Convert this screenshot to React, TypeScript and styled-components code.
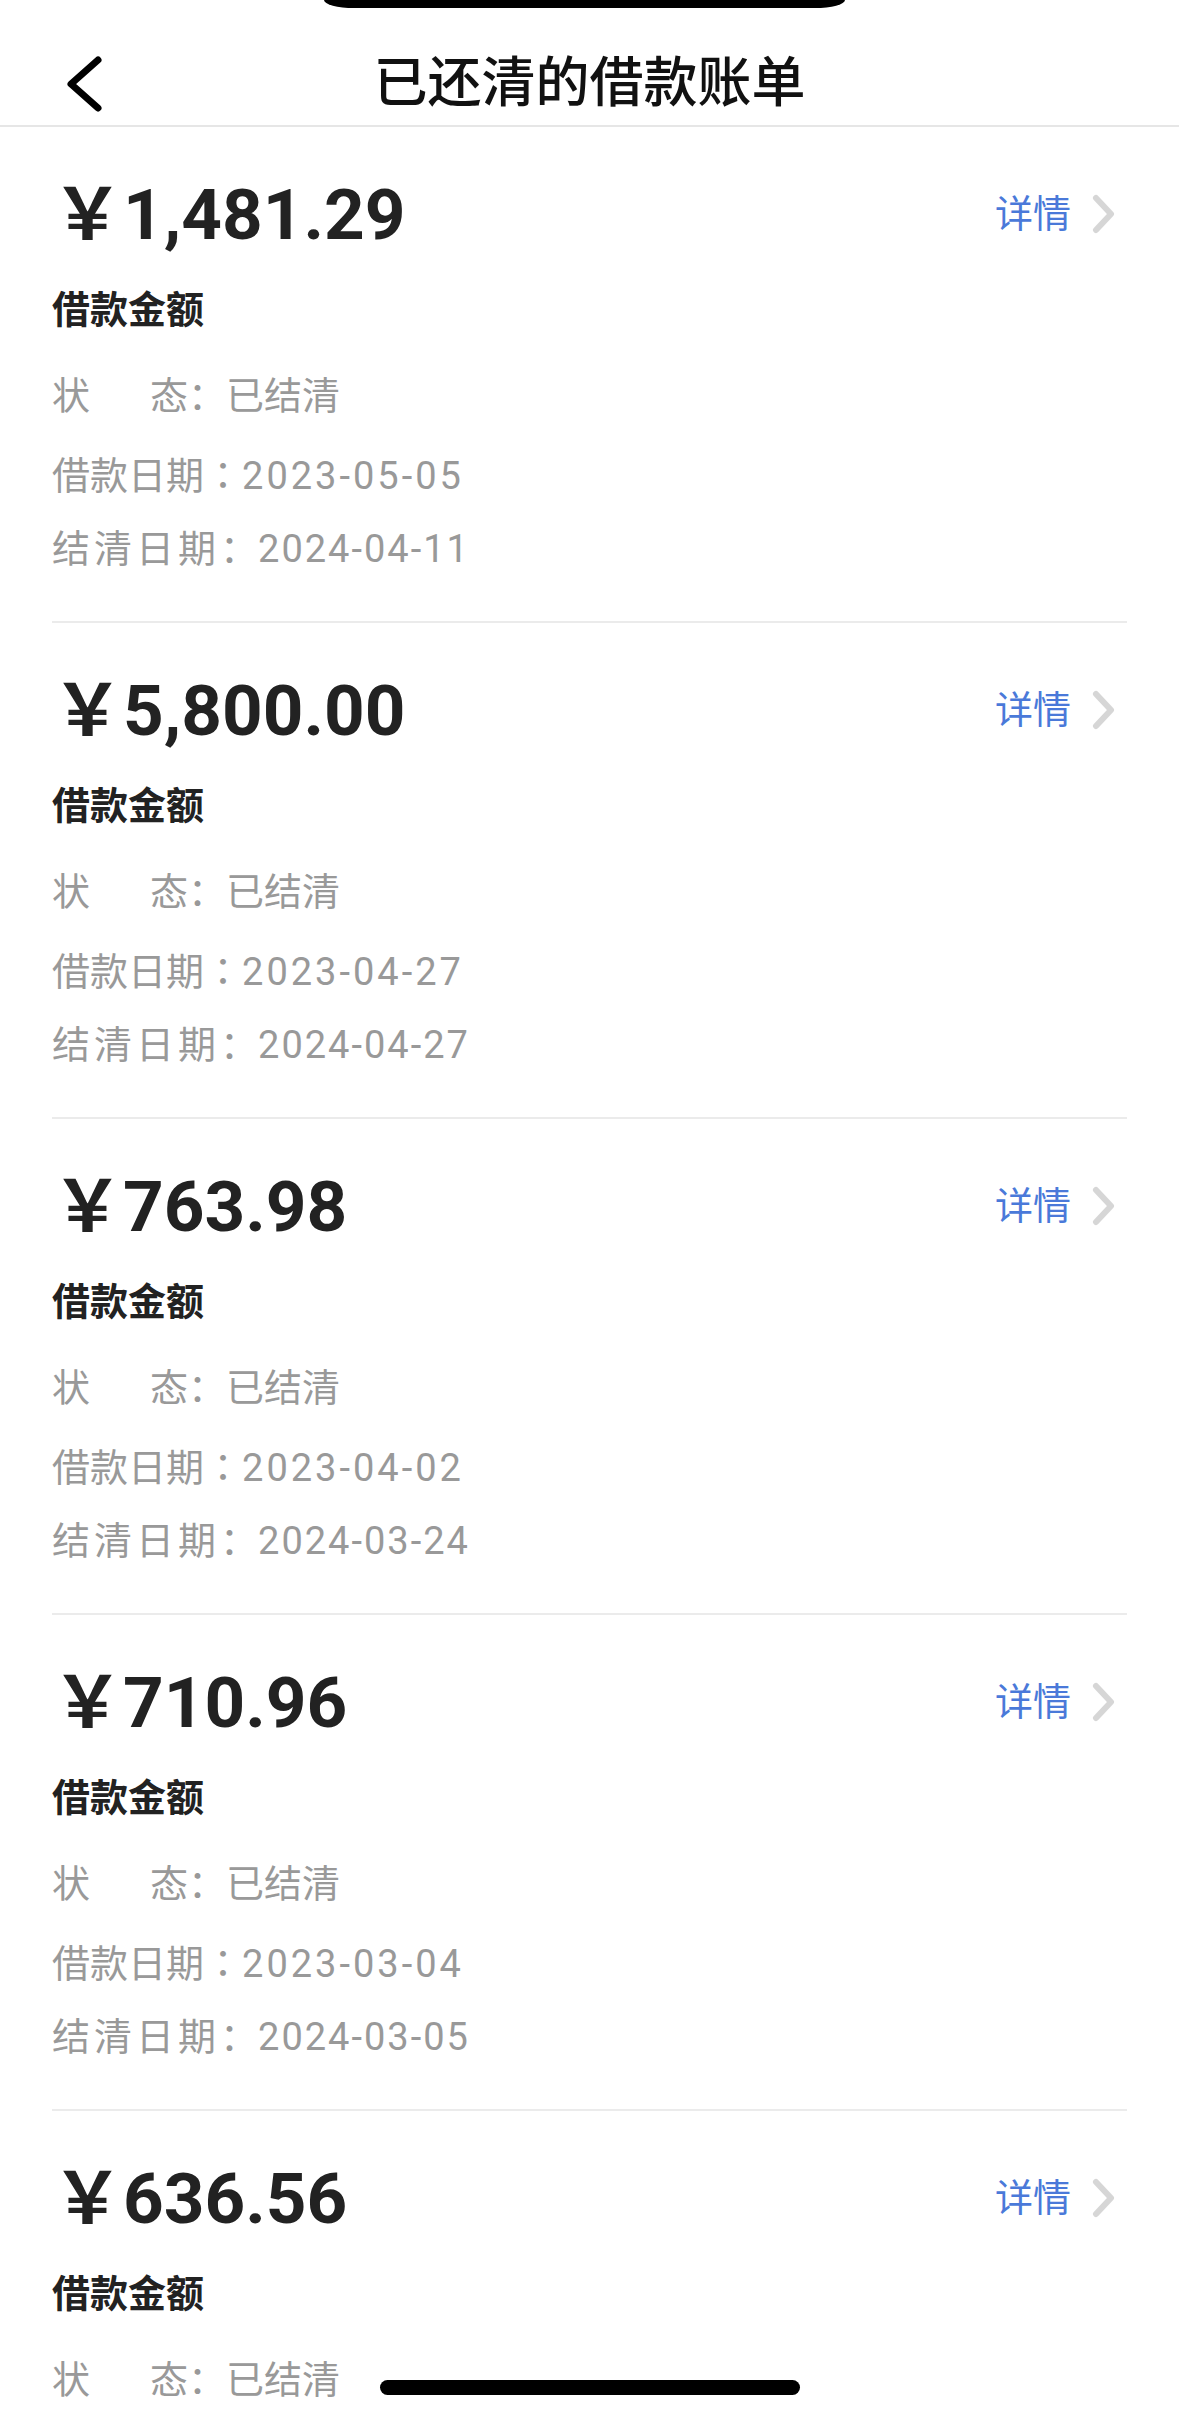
import { createGlobalStyle, styled } from "styled-components";

const GlobalStyle = createGlobalStyle`
  html, body {
    margin: 0;
    padding: 0;
    background: #fff;
  }
  body {
    font-family: Roboto, "Noto Sans CJK SC", sans-serif;
    -webkit-font-smoothing: antialiased;
  }
`;

const records = [
  { amount: "1,481.29", loanDate: "2023-05-05", settleDate: "2024-04-11" },
  { amount: "5,800.00", loanDate: "2023-04-27", settleDate: "2024-04-27" },
  { amount: "763.98", loanDate: "2023-04-02", settleDate: "2024-03-24" },
  { amount: "710.96", loanDate: "2023-03-04", settleDate: "2024-03-05" },
  { amount: "636.56", loanDate: "2023-02-14", settleDate: "2024-02-20" },
];

const BackIcon = () => (
  <svg width="42" height="58" viewBox="0 0 42 58">
    <path
      d="M34 5 L7 29 L34 53"
      fill="none"
      stroke="#000"
      strokeWidth="7"
      strokeLinecap="round"
      strokeLinejoin="round"
    />
  </svg>
);

const ArrowIcon = () => (
  <svg width="26" height="40" viewBox="0 0 26 40">
    <path
      d="M5 4 L20 20 L5 36"
      fill="none"
      stroke="#d6d6d6"
      strokeWidth="6"
      strokeLinecap="round"
      strokeLinejoin="round"
    />
  </svg>
);

export default function App() {
  return (
    <Screen>
      <GlobalStyle />
      <Header>
        <Notch />
        <BackButton>
          <BackIcon />
        </BackButton>
        <Title>已还清的借款账单</Title>
        <span />
      </Header>
      {records.map((r) => (
        <Card key={r.amount}>
          <AmountRow>
            <Amount>￥{r.amount}</Amount>
            <DetailLink>
              详情
              <ArrowIcon />
            </DetailLink>
          </AmountRow>
          <Label>借款金额</Label>
          <InfoRow $top={45}>
            <FieldName $width={136}>状态</FieldName>
            <Colon>：</Colon>已结清
          </InfoRow>
          <InfoRow $top={42}>
            <FieldName>借款日期</FieldName>
            <Colon $centered>：</Colon>
            <DateValue>{r.loanDate}</DateValue>
          </InfoRow>
          <InfoRow $top={35}>
            <FieldName $spread={4}>结清日期</FieldName>
            <Colon>：</Colon>
            <DateValue $spread={2}>{r.settleDate}</DateValue>
          </InfoRow>
        </Card>
      ))}
      <HomeIndicator />
    </Screen>
  );
}

const Screen = styled.div`
  position: relative;
  width: 1179px;
  height: 2413px;
  overflow: hidden;
  background: #fff;
`;

const Header = styled.header`
  position: relative;
  display: grid;
  grid-template-columns: 1fr auto 1fr;
  align-items: center;
  height: 127px;
  padding-top: 42px;
  box-sizing: border-box;
  border-bottom: 2px solid #e6e6e6;
`;

const Notch = styled.div`
  position: absolute;
  top: 0;
  left: 324px;
  width: 521px;
  height: 8px;
  background: #000;
  border-radius: 0 0 30px 30px / 0 0 8px 8px;
`;

const BackButton = styled.div`
  display: flex;
  align-items: center;
  padding-left: 64px;
`;

const Title = styled.h1`
  margin: 0;
  font-size: 54px;
  line-height: 1;
  font-weight: 500;
  color: #111;
  white-space: nowrap;
`;

const Card = styled.section`
  margin: 0 52px;
  padding-bottom: 56px;
  border-bottom: 2px solid #ebebeb;
`;

const AmountRow = styled.div`
  display: flex;
  align-items: center;
  justify-content: space-between;
  height: 80px;
  margin-top: 47px;
`;

const Amount = styled.div`
  font-size: 71px;
  line-height: 1;
  font-weight: 700;
  color: #222;
  white-space: nowrap;
`;

const DetailLink = styled.div`
  display: flex;
  align-items: center;
  gap: 20px;
  margin-right: 10px;
  font-size: 38px;
  line-height: 1;
  color: #4a79d9;
`;

const Label = styled.div`
  height: 38px;
  margin-top: 37px;
  font-size: 38px;
  line-height: 38px;
  font-weight: 700;
  color: #222;
`;

const InfoRow = styled.div<{ $top: number }>`
  height: 38px;
  margin-top: ${(p) => p.$top}px;
  font-size: 38px;
  line-height: 38px;
  color: #999;
  white-space: nowrap;
`;

const FieldName = styled.span<{ $width?: number; $spread?: number }>`
  display: inline-block;
  width: ${(p) => (p.$width ? `${p.$width}px` : "auto")};
  text-align-last: justify;
  letter-spacing: ${(p) => p.$spread ?? 0}px;
`;

const Colon = styled.span<{ $centered?: boolean }>`
  font-family: ${(p) =>
    p.$centered ? `"Noto Sans CJK TC", sans-serif` : `"Noto Sans CJK SC", sans-serif`};
`;

const DateValue = styled.span<{ $spread?: number }>`
  letter-spacing: ${(p) => p.$spread ?? 3}px;
`;

const HomeIndicator = styled.div`
  position: absolute;
  bottom: 18px;
  left: 380px;
  width: 420px;
  height: 15px;
  border-radius: 8px;
  background: #000;
`;
